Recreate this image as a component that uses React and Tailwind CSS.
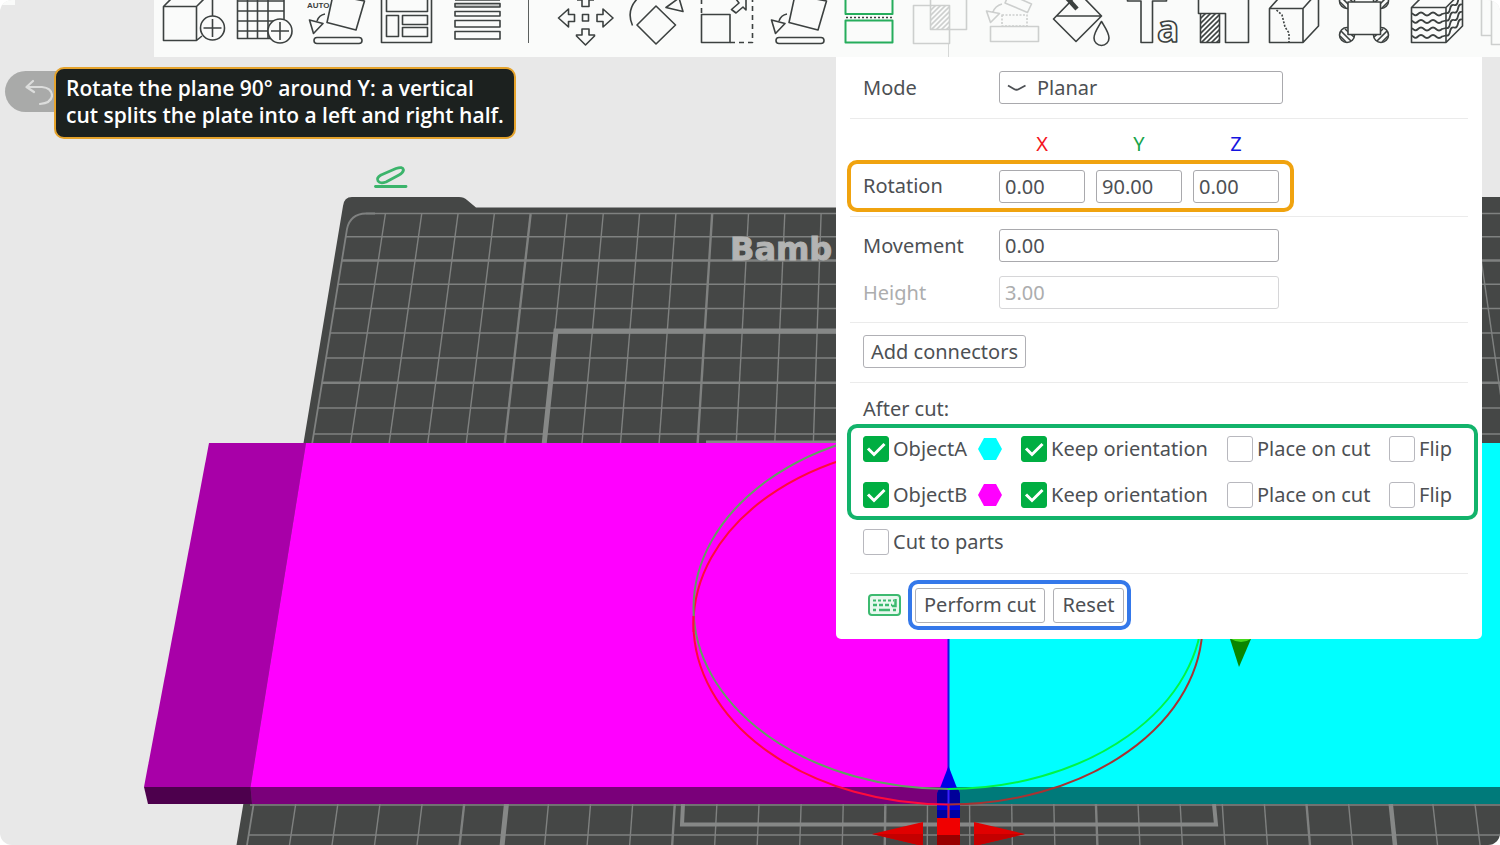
import React, { useState } from 'react';

// Perspective of the print bed: spacing between columns grows towards the viewer
const bedX = (k, y) => 946 + (k - 15.44) * (36.3 + (y - 213) * 0.00984);
const BED_COLS = Array.from({ length: 33 }, (_, i) => i - 1);
const BED_ROWS = [213.5, 236.7, 260.5, 284.3, 308.5, 333, 358, 382.7, 408, 434, 835];
const BOLD_ROWS = [260.5, 382.7];

const Bed = () => (
  <g>
    <path d="M343 206 Q344 197 352 197 H459 Q464 197 467 200 L476 207.5 H1418 L1430 197 H1520 V860 H234 Z" fill="#454746" />
    <g stroke="#7f8180" fill="none">
      {BED_COLS.slice(1).map((k) => (
        <line key={k} x1={bedX(k, 214)} y1={214} x2={bedX(k, 860)} y2={860} strokeWidth={k % 5 === 4 ? 2.4 : 1.4} />
      ))}
      <path d={`M375 213.5 H366 Q350 214 347 229 L${bedX(-1, 860)} 860`} strokeWidth="1.8" />
      {BED_ROWS.map((y) => (
        <line
          key={y}
          x1={y < 214 ? 366 : bedX(-1, y)}
          y1={y}
          x2={1510}
          y2={y}
          strokeWidth={BOLD_ROWS.includes(y) ? 2.6 : 1.6}
        />
      ))}
      <line x1="250" y1="805" x2="1500" y2="805" strokeWidth="1.4" />
      {/* printable area frames */}
      <path d={`M${bedX(5, 860)} 860 L556 331 H1400`} strokeWidth="5" stroke="#868887" />
      <path d={`M${bedX(26, 804)} 804 L${bedX(26, 860)} 860`} strokeWidth="4.5" stroke="#868887" />
      <path d="M706 442 H1180" strokeWidth="3" stroke="#868887" />
      <path d="M683 804 L682 824.5 H1216 L1214 804" strokeWidth="4" stroke="#868887" />
    </g>
    <text x="730" y="260" fill="#b3b4b3" stroke="#b3b4b3" strokeWidth="1" fontSize="32" fontWeight="700" fontFamily="DejaVu Sans, sans-serif">Bamb</text>
  </g>
);

const Scene = () => (
  <svg className="absolute inset-0 h-full w-full" viewBox="0 0 1500 845" preserveAspectRatio="xMidYMin slice" aria-hidden="true">
    <defs>
      <clipPath id="leftHalf"><rect x="0" y="0" width="948" height="845" /></clipPath>
      <clipPath id="rightHalf"><rect x="948" y="0" width="552" height="845" /></clipPath>
    </defs>
    <path d="M0 0 H15 V5 H0 Z" fill="#fafbfa" />
    <Bed />

    {/* pencil above the plate */}
    <g fill="none" stroke="#3bb46b" strokeWidth="2.8" strokeLinejoin="round" strokeLinecap="round">
      <path d="M375.500 186.500 H406" />
      <path d="M378 181 Q376 178 381 175 L396 168.500 Q403 166 403.500 170 Q403 173 399 175 L386 182 Q380 184 378 181 Z" />
    </g>

    {/* part B */}
    <polygon points="209,443 306,443 250.500,787 144,787" fill="#a800a8" />
    <polygon points="306,443 948,443 948,787 250.500,787" fill="#ff00ff" />
    <polygon points="144,787 250.500,787 252,804 148,804" fill="#4d004d" />
    <polygon points="250.500,787 948,787 948,804 252,804" fill="#7a007a" />
    {/* part A */}
    <rect x="948" y="443" width="560" height="344" fill="#00ffff" />
    <rect x="948" y="787" width="560" height="17" fill="#007a7a" />
    <line x1="948.500" y1="443" x2="948.500" y2="775" stroke="#0a1ee0" strokeWidth="2" />

    {/* vertical axis grabber */}
    <polygon points="948.500,766 957,788 956,796 941,796 940,788" fill="#0000e6" />
    <rect x="937" y="792" width="23" height="26" rx="2" fill="#0000d8" />
    <path d="M937 797 Q937 788 942 788 H955 Q960 788 960 797 V803 H937 Z" fill="#000099" />
    <rect x="937" y="810" width="23" height="8" fill="#0000a0" />
    <path d="M948.500 790 V818" stroke="#3a20ff" strokeWidth="2" />

    <g fill="none" strokeWidth="2">
      <g clipPath="url(#leftHalf)">
        <ellipse cx="948" cy="624" rx="254.500" ry="180.500" stroke="#ff0a3c" />
        <ellipse cx="948" cy="608" rx="254.500" ry="181" stroke="#62a062" />
      </g>
      <g clipPath="url(#rightHalf)">
        <ellipse cx="948" cy="624" rx="254.500" ry="180.500" stroke="#a83232" />
        <ellipse cx="948" cy="608" rx="254.500" ry="181" stroke="#00f546" />
      </g>
      <path d="M693.500 616 V632" stroke="#ff0a3c" />
      <path d="M948.500 804 V820" stroke="#d4142c" />
    </g>

    <polygon points="1230,639 1251,639 1239,667" fill="#0a8500" />
    <path d="M1231 639 H1251 Q1241 645 1231 639 Z" fill="#45d81c" />

    <polygon points="872,834 923,822 923,846" fill="#e00000" />
    <polygon points="872,834 923,834 923,846" fill="#c40000" />
    <polygon points="1025,834 974,822 974,846" fill="#e00000" />
    <polygon points="1025,834 974,834 974,846" fill="#c40000" />
    <rect x="937" y="818" width="23" height="17" fill="#f00000" />
    <rect x="937" y="835" width="23" height="12" fill="#980000" />
  </svg>
);

const OrientShape = () => (
  <>
    <path d="M26 22.500 L55 30 L63.500 1 L32 -5 Z" />
    <path d="M8.500 20 L22 23.500 L12.500 33.500 Z" />
    <path d="M16 21 Q18 15 24 14" />
    <rect x="13" y="37.500" width="48" height="6" rx="3" />
  </>
);

const Hatch = ({ x, y, w, h, id }) => (
  <>
    <clipPath id={id}><rect x={x} y={y} width={w} height={h} /></clipPath>
    <g clipPath={`url(#${id})`}>
      {Array.from({ length: 16 }, (_, i) => (
        <line key={i} x1={x} y1={y + i * 5} x2={x + w} y2={y + i * 5 - w} />
      ))}
    </g>
  </>
);

const LEFT_TOOLS = [
  {
    name: 'Add object',
    art: (
      <>
        <path d="M4.500 6.500 H37.500 V40.500 H4.500 Z M4.500 6.500 L12 -1 M37.500 6.500 L45 -1 M37.500 40.500 L43 36 M53.500 0 V16" />
        <circle cx="53.500" cy="28" r="12" fill="#fafbfa" />
        <path d="M53.500 19 V37 M44.500 28 H62.500" />
      </>
    ),
  },
  {
    name: 'Add plate',
    art: (
      <>
        <path d="M7.500 -1 V38.500 H46 M17.500 -1 V38.500 M27.500 -1 V38.500 M38 -1 V38.500 M54 -1 V20 M7.500 1 H54 M7.500 11 H54 M7.500 21 H54 M7.500 31 H46" />
        <circle cx="50" cy="31" r="12" fill="#fafbfa" />
        <path d="M50 22 V40 M41 31 H59" />
      </>
    ),
  },
  {
    name: 'Auto orient',
    art: (
      <>
        <OrientShape />
        <text x="6" y="8" fontSize="8" fontWeight="700" stroke="none" fill="#3c4140" fontFamily="Liberation Sans, sans-serif">AUTO</text>
      </>
    ),
  },
  {
    name: 'Arrange',
    art: <path d="M9.500 -2 V42.500 H59.500 V-2 M14.500 -2 V11.500 H55.500 V-2 M14.500 15.500 H26.500 V36.500 H14.500 Z M30.500 15.500 H55.500 V24.500 H30.500 Z M30.500 27.500 H55.500 V36.500 H30.500 Z" />,
  },
  {
    name: 'Variable layer height',
    art: (
      <>
        <rect x="12" y="3.500" width="45" height="3.500" fill="#c4c6c5" />
        <path d="M12 0 H57 M12 11.500 H57 V16 H12 Z M12 20.500 H57 V27 H12 Z M12 31.500 H57 V39 H12 Z" />
      </>
    ),
  },
];

const RIGHT_TOOLS = [
  {
    name: 'Move',
    art: <path d="M32.500 14.500 H38.500 V21 H32.500 Z M8.500 18 L18.500 9 V14.500 H24.500 V21.500 H18.500 V27 Z M63 18 L53 9 V14.500 H47 V21.500 H53 V27 Z M35.500 45 L26.500 36 V35 H32 V29 H39 V35 H44.500 V36 Z M27 0 H32 V6.500 H39 V0 H44" />,
  },
  {
    name: 'Rotate',
    art: <path d="M35 6 L54.500 25 L35 44 L16 25 Z M11.500 25.500 Q5 11 16 -1 M45 7.500 L62 11.500 L58 -2 Z" />,
  },
  {
    name: 'Scale',
    art: (
      <>
        <rect x="9.500" y="14.500" width="28.500" height="28" />
        <path d="M9.500 13 V-2 M38 42.500 H60.500 V-2" strokeDasharray="5 4" />
        <path d="M39.500 9.500 L47 3 L44 -1 H54 V10 L51 7 L44 13 Z" />
      </>
    ),
  },
  { name: 'Lay on face', art: <OrientShape /> },
  {
    name: 'Cut',
    active: true,
    art: (
      <>
        <path d="M11.500 -3 V14 H58.500 V-3 M11.500 20.500 H58.500 V42.500 H11.500 Z" stroke="#26ad5c" strokeWidth="2" />
        <path d="M12 17.500 H59" strokeDasharray="2 2" strokeWidth="1.600" />
      </>
    ),
  },
  {
    name: 'Mesh boolean',
    disabled: true,
    art: (
      <>
        <path d="M8.500 5.500 H44.500 V43.500 H8.500 Z M25.500 -3 V29.500 H61.500 V-3" />
        <path d="M43.500 44 V57" strokeWidth="0.800" />
        <Hatch id="boolHatch" x={25.5} y={5.5} w={19} h={24} />
      </>
    ),
  },
  {
    name: 'Assemble',
    disabled: true,
    art: (
      <>
        <path d="M14.500 26.500 H62.500 V41.500 H14.500 Z M29 3 L51.500 12.500 L55.500 4 L33 -6 Z M10.500 11 L23.500 13.500 L14.500 22.500 Z M17 12 Q19 6 26 4" />
        <rect x="26" y="15" width="25" height="11" strokeDasharray="2 1.500" />
      </>
    ),
  },
  {
    name: 'Color painting',
    art: (
      <>
        <path d="M26 -1 L6.500 19 L29 41.500 L54.500 16 L38 -1 M9.500 16 H54.500" />
        <path d="M20 -2 L30 9" strokeWidth="4.500" />
        <path d="M54.500 21.500 C50 29 47 33 47 38 A7.500 7.500 0 0 0 62 38 C62 33 59 29 54.500 21.500 Z" fill="#fafbfa" />
      </>
    ),
  },
  {
    name: 'Text shape',
    art: (
      <>
        <path d="M9.500 -2 V1 H23 V42.500 H34.500 V1 H48.500 V-2" />
        <text x="39" y="42" fontSize="37" fontWeight="700" fill="#fafbfa" fontFamily="Noto Sans, sans-serif">a</text>
      </>
    ),
  },
  {
    name: 'Support painting',
    art: (
      <>
        <path d="M9.500 -2 V13.500 H36.500 V42.500 H59.500 V-2 M11.500 13.500 V42.500 H30.500 V13.500" />
        <Hatch id="supportHatch" x={11.5} y={13.5} w={19} h={29} />
      </>
    ),
  },
  {
    name: 'Seam painting',
    art: (
      <>
        <path d="M9.500 8.500 H43 V42.500 H9.500 Z M9.500 8.500 L18 -1 M43 8.500 L51.500 -1 M43 42.500 L58.500 26 V-2" />
        <path d="M16.500 10 L22 15 L25 27 L29 33 V42" strokeDasharray="2 1.500" />
      </>
    ),
  },
  {
    name: 'Brim ears',
    art: (
      <>
        {[[16, 35], [50, 35], [16, 1], [50, 1]].map(([x, y]) => (
          <g key={`${x}-${y}`}>
            <circle cx={x} cy={y} r="7.500" fill="#fafbfa" />
            <path d={x < 30 ? `M${x - 6} ${y - 4} L${x + 4} ${y + 6} M${x - 7} ${y + 1} L${x - 1} ${y + 7} M${x - 2} ${y - 6} L${x + 7} ${y + 2}` : `M${x + 6} ${y - 4} L${x - 4} ${y + 6} M${x + 7} ${y + 1} L${x + 1} ${y + 7} M${x + 2} ${y - 6} L${x - 7} ${y + 2}`} />
          </g>
        ))}
        <rect x="17" y="2" width="32.500" height="32.500" fill="#fafbfa" />
      </>
    ),
  },
  {
    name: 'Fuzzy skin',
    art: (
      <>
        <path d="M9.500 7.500 H44 V42.500 H9.500 Z M9.500 7.500 L18 -1 M44 7.500 L52.500 -1 M44 42.500 L60.500 26 V-2" />
        {[13, 20.5, 28, 35.5].map((y) => (
          <path key={y} strokeWidth="1.800" d={`M10 ${y} q3 4 6 1 t6 0 t6 0 t6 0 t6 0 l4 -1 q3 1 4 -4 t4 -4 t4 -4 t4 -4`} />
        ))}
      </>
    ),
  },
  {
    name: 'Assembly view',
    disabled: true,
    art: <path d="M8.500 -2 V35.500 H18.500 M18.500 -2 V44.500 H70" />,
  },
];

const ToolButton = ({ tool }) => (
  <button
    type="button"
    aria-label={tool.name}
    aria-pressed={!!tool.active}
    disabled={tool.disabled}
    className={`h-full w-[71px] shrink-0 ${tool.disabled ? 'text-[#cdcfce]' : 'text-[#3c4140]'}`}
  >
    <svg className="block h-[57px] w-[71px]" viewBox="0 0 71 57" fill="none" stroke="currentColor" strokeWidth="1.600" strokeLinejoin="round">
      {tool.art}
    </svg>
  </button>
);

const Separator = () => <hr className="ml-[3px] mr-2.5 border-t border-[#ebebeb]" />;

const Checkbox = ({ label, defaultChecked }) => (
  <label className="flex items-center gap-1 whitespace-nowrap">
    <span className="relative flex">
      <input
        type="checkbox"
        defaultChecked={defaultChecked}
        className="peer h-[26px] w-[26px] appearance-none rounded-[3px] border border-[#b8b8be] bg-white checked:border-[#00ae42] checked:bg-[#00ae42]"
      />
      <svg className="pointer-events-none absolute inset-0 hidden h-full w-full peer-checked:block" viewBox="0 0 26 26" fill="none" stroke="#fff" strokeWidth="3">
        <path d="M5 12.500 L11 18.500 L21.500 8" />
      </svg>
    </span>
    {label}
  </label>
);

const Hexagon = ({ color }) => (
  <svg className="h-6 w-6" viewBox="0 0 24 24" aria-hidden="true">
    <polygon points="6,1 18,1 24,12 18,23 6,23 0,12" fill={color} />
  </svg>
);

const FIELD = 'h-[33px] rounded-[3px] border border-[#a9a9ad] bg-white pl-[5px]';
const BUTTON = 'rounded-[3px] border border-[#b0b0b5] bg-white text-center';

const CutPanel = () => {
  const [rotation, setRotation] = useState({ X: '0.00', Y: '90.00', Z: '0.00' });
  const [movement, setMovement] = useState('0.00');

  return (
    <section className="relative w-[646px] shrink-0 rounded-b-[5px] bg-white pt-3.5 pb-[9px] pl-[11px] pr-1 font-['Noto_Sans',sans-serif] text-[20px] leading-[26px] text-[#4d5054]">
      <div className="mb-3.5 flex items-center pl-4">
        <label htmlFor="mode" className="w-[136px]">Mode</label>
        <div className="relative">
          <select id="mode" className="h-[33px] w-[284px] appearance-none rounded-[3px] border border-[#a9a9ad] bg-white pl-[37px]">
            <option>Planar</option>
          </select>
          <svg className="pointer-events-none absolute left-2 top-3 h-2.5 w-5" viewBox="0 0 20 10" fill="none" stroke="#4d5054" strokeWidth="1.800">
            <path d="M1 2.500 L7 6 Q9.500 7.500 12 6 L18.500 2.500" />
          </svg>
        </div>
      </div>
      <Separator />

      <div className="flex h-[41px] items-center gap-[11px] pl-[152px] pt-2">
        <span className="w-[86px] text-center text-[#f5141e]">X</span>
        <span className="w-[86px] text-center text-[#16a34a]">Y</span>
        <span className="w-[86px] text-center text-[#1414e0]">Z</span>
      </div>

      {/* Rotation highlight */}
      <div className="mb-1 flex h-[52px] w-[447px] items-center rounded-[10px] border-4 border-[#f0a30f] pl-3">
        <span className="w-[136px]">Rotation</span>
        <div className="flex gap-[11px]">
          {Object.keys(rotation).map((axis) => (
            <input
              key={axis}
              aria-label={`Rotation ${axis}`}
              value={rotation[axis]}
              onChange={(e) => setRotation({ ...rotation, [axis]: e.target.value })}
              className={`${FIELD} w-[86px]`}
            />
          ))}
        </div>
      </div>
      <Separator />

      <div className="mt-3 flex items-center pl-4">
        <label htmlFor="movement" className="w-[136px]">Movement</label>
        <input id="movement" value={movement} onChange={(e) => setMovement(e.target.value)} className={`${FIELD} w-[280px]`} />
      </div>
      <div className="mt-3.5 mb-[13px] flex items-center pl-4 text-[#acadae]">
        <label htmlFor="height" className="w-[136px]">Height</label>
        <input id="height" value="3.00" disabled readOnly className="h-[33px] w-[280px] rounded-[3px] border border-[#d6d6d8] bg-white pl-[5px]" />
      </div>
      <Separator />

      <button type="button" className={`${BUTTON} my-3 ml-4 mb-3.5 block h-[33px] w-[163px]`}>Add connectors</button>
      <Separator />

      <p className="flex h-[41px] items-center pl-4 pt-[11px]">After cut:</p>

      {/* Objects highlight */}
      <div className="flex h-24 flex-col justify-center gap-5 rounded-[10px] border-4 border-[#12b36b] pl-3">
        {[
          { label: 'ObjectA', color: '#00ffff' },
          { label: 'ObjectB', color: '#ff00ff' },
        ].map((obj) => (
          <div key={obj.label} className="grid h-[26px] grid-cols-[158px_206px_162px_auto] items-center">
            <div className="flex items-center gap-[11px]">
              <Checkbox label={obj.label} defaultChecked />
              <Hexagon color={obj.color} />
            </div>
            <Checkbox label="Keep orientation" defaultChecked />
            <Checkbox label="Place on cut" />
            <Checkbox label="Flip" />
          </div>
        ))}
      </div>

      <div className="mt-[9px] mb-[18px] flex pl-4">
        <Checkbox label="Cut to parts" />
      </div>
      <Separator />

      <div className="mt-1.5 flex items-center gap-[7px] pl-[21px]">
        <svg className="h-[22px] w-[33px]" viewBox="0 0 33 22" fill="none" stroke="#3dba70" strokeWidth="2" aria-hidden="true">
          <rect x="1" y="1" width="31" height="20" rx="3" fill="#e9f8ef" />
          <path d="M5 6.500 H26" strokeDasharray="3 2" />
          <path d="M5 11 H24" strokeDasharray="4 2" strokeWidth="2.500" />
          <path d="M27.500 5 V12 H24" strokeWidth="2.500" />
          <path d="M5 16 H8 M11 16 H22 M25 16 H28" strokeWidth="2.500" />
        </svg>
        {/* Actions highlight */}
        <div className="flex h-[50px] items-center gap-2 rounded-[10px] border-4 border-[#3478ea] px-[3px]">
          <button type="button" className={`${BUTTON} h-[35px] w-[130px]`}>Perform cut</button>
          <button type="button" className={`${BUTTON} h-[35px] w-[71px]`}>Reset</button>
        </div>
      </div>
    </section>
  );
};

const App = () => (
  <div className="relative min-h-screen overflow-hidden rounded-xl bg-[#e8e8e8]">
    <Scene />

    <header className="relative ml-[154px] flex h-[57px] overflow-hidden bg-[#fafbfa] pl-[5px]">
      {LEFT_TOOLS.map((tool) => <ToolButton key={tool.name} tool={tool} />)}
      <div className="ml-3.5 mr-[21px] h-[43px] w-px shrink-0 bg-[#5b5f5e]" />
      {RIGHT_TOOLS.map((tool) => <ToolButton key={tool.name} tool={tool} />)}
    </header>

    <main className="relative flex items-start justify-between pl-[5px] pr-[18px]">
      <div className="relative pt-2.5">
        <button type="button" aria-label="Undo" className="mt-1 flex h-[41px] w-[90px] items-center rounded-full bg-[#a9aaa9] pl-5">
          <svg className="h-7 w-7" viewBox="0 0 28 28" fill="none" stroke="#dcdddc" strokeWidth="2.200" strokeLinejoin="round" strokeLinecap="round">
            <path d="M8 3 L1.500 9 L9 14 M2 9 H17 Q27 10 27 18 Q26 25 15 26" />
          </svg>
        </button>
        <p className="absolute left-[49px] top-2.5 whitespace-nowrap rounded-[10px] border-2 border-[#e5a32c] bg-[#1c211f] px-2.5 pt-1.5 pb-2 font-['Open_Sans',sans-serif] text-[21px] font-semibold leading-[27px] text-white">
          Rotate the plane 90° around Y: a vertical<br />
          cut splits the plate into a left and right half.
        </p>
      </div>
      <CutPanel />
    </main>
  </div>
);

export default App;
